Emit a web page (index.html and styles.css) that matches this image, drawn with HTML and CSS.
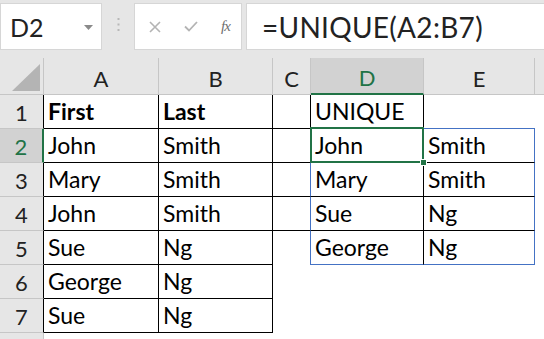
FILE: index.html
```html
<html>
<head>
<link rel="stylesheet" href="styles.css">
</head>
<body>
<div class="toolbar">
    <div class="namebox">
        <span class="ref">D2</span>
        <svg class="drop" width="9" height="5" viewBox="0 0 9 5"><path d="M0 0h9L4.5 5z" fill="#8a8a8a"/></svg>
    </div>
    <div class="grip">
        <svg width="3" height="13" viewBox="0 0 3 13"><rect x="0.5" y="0" width="2" height="2" fill="#b8b8b8"/><rect x="0.5" y="5.5" width="2" height="2" fill="#b8b8b8"/><rect x="0.5" y="11" width="2" height="2" fill="#b8b8b8"/></svg>
    </div>
    <div class="fxbox">
        <svg width="12" height="12" viewBox="0 0 12 12"><path d="M1 1L11 11M11 1L1 11" stroke="#b4b4b4" stroke-width="1.6"/></svg>
        <svg width="14" height="11" viewBox="0 0 14 11"><path d="M1 5.5L5 9.5L13 1" stroke="#b4b4b4" stroke-width="1.8" fill="none"/></svg>
        <span class="fx">fx</span>
    </div>
    <div class="formula">=UNIQUE(A2:B7)</div>
</div>
<div class="sheet">
    <div class="hd corner"><svg width="28" height="27" viewBox="0 0 28 27"><path d="M28 0V27H0z" fill="#b4b4b4"/></svg></div>
    <div class="hd col">A</div>
    <div class="hd col">B</div>
    <div class="hd col">C</div>
    <div class="hd col sel">D</div>
    <div class="hd col">E</div>
    <div class="hd col last"></div>

    <div class="hd row ruled">1</div>
    <div class="c tb bold">First</div>
    <div class="c tb bold">Last</div>
    <div class="c tb"></div>
    <div class="c tb">UNIQUE</div>
    <div class="c rng-top"></div>
    <div class="c"></div>

    <div class="hd row ruled sel">2</div>
    <div class="c tb">John</div>
    <div class="c tb">Smith</div>
    <div class="c cb rng-left"></div>
    <div class="c tb active">John</div>
    <div class="c cb rng-right">Smith</div>
    <div class="c"></div>

    <div class="hd row ruled">3</div>
    <div class="c tb">Mary</div>
    <div class="c tb">Smith</div>
    <div class="c cb rng-left"></div>
    <div class="c tb">Mary</div>
    <div class="c cb rng-right">Smith</div>
    <div class="c"></div>

    <div class="hd row ruled">4</div>
    <div class="c tb">John</div>
    <div class="c tb">Smith</div>
    <div class="c cb rng-left"></div>
    <div class="c tb">Sue</div>
    <div class="c cb rng-right">Ng</div>
    <div class="c"></div>

    <div class="hd row ruled">5</div>
    <div class="c tb">Sue</div>
    <div class="c tb">Ng</div>
    <div class="c rng-left"></div>
    <div class="c rng-bottom tb">George</div>
    <div class="c rng-bottom rng-right">Ng</div>
    <div class="c"></div>

    <div class="hd row ruled">6</div>
    <div class="c tb">George</div>
    <div class="c tb">Ng</div>
    <div class="c"></div>
    <div class="c"></div>
    <div class="c"></div>
    <div class="c"></div>

    <div class="hd row ruled">7</div>
    <div class="c tb">Sue</div>
    <div class="c tb">Ng</div>
    <div class="c"></div>
    <div class="c"></div>
    <div class="c"></div>
    <div class="c"></div>

    <div class="hd row"></div>
    <div class="c"></div>
    <div class="c"></div>
    <div class="c"></div>
    <div class="c"></div>
    <div class="c"></div>
    <div class="c"></div>
</div>
</body>
</html>
```

FILE: styles.css
```css
body {
    margin: 0;
    width: 544px;
    height: 339px;
    overflow: hidden;
    background: #e6e6e6;
    font-family: Lato, "Open Sans", sans-serif;
    color: #000;
}
.toolbar {
    display: flex;
    height: 58px;
    padding-top: 3px;
    box-sizing: border-box;
}
.namebox {
    display: flex;
    align-items: center;
    justify-content: space-between;
    width: 102px;
    height: 47px;
    box-sizing: border-box;
    background: #fff;
    border: 1px solid #d6d6d6;
    padding: 0 8px 0 9px;
}
.ref {
    font-size: 25px;
    color: #222;
}
.drop {
    margin-top: 2px;
}
.grip {
    display: flex;
    align-items: center;
    justify-content: center;
    width: 32px;
    height: 47px;
    padding-bottom: 4px;
    box-sizing: border-box;
}
.fxbox {
    display: flex;
    align-items: center;
    width: 108px;
    height: 47px;
    box-sizing: border-box;
    background: #fff;
    border: 1px solid #d6d6d6;
    padding: 0 0 0 14px;
    gap: 23px;
}
.fx {
    font-family: "Liberation Serif", serif;
    font-style: italic;
    font-size: 15px;
    color: #6f6f6f;
    letter-spacing: -1px;
}
.formula {
    flex: 1;
    margin-left: 4px;
    height: 47px;
    box-sizing: border-box;
    background: #fff;
    border: 1px solid #d6d6d6;
    border-right: none;
    padding: 6px 0 0 15px;
    font-size: 28px;
    color: #222;
    letter-spacing: 0.3px;
}
.sheet {
    display: grid;
    grid-template-columns: 44px 115px 114px 38px 113px 111px 1fr;
    grid-template-rows: 37px repeat(8, 34px);
    background: #fff;
}
.sheet > div {
    box-sizing: border-box;
}
.hd {
    background: #e6e6e6;
    border-right: 1px solid #c6c6c6;
    border-bottom: 1px solid #c6c6c6;
    display: flex;
    align-items: center;
    justify-content: center;
    font-size: 22px;
    color: #222;
}
.corner {
    align-items: flex-end;
    justify-content: flex-end;
    padding: 0 3px 3px 0;
    border-right-color: #c6c6c6;
}
.col {
    padding-top: 4px;
}
.col.last {
    border-right: none;
}
.row {
    padding-top: 2px;
    border-right: 1px solid #c6c6c6;
}
.row.ruled {
    border-right: 1px solid #000;
}
.hd.sel {
    background: #d2d2d2;
    color: #217346;
}
.col.sel {
    border-bottom: 2px solid #217346;
}
.row.sel {
    border-right: 2px solid #217346;
}
.c {
    display: flex;
    align-items: flex-end;
    padding: 0 4px 5px 4px;
    font-size: 23px;
    line-height: 1;
    white-space: nowrap;
}
.bold {
    font-weight: bold;
}
.tb {
    border-right: 1px solid #000;
    border-bottom: 1px solid #000;
}
.cb {
    border-bottom: 1px solid #000;
}
.rng-top {
    border-bottom: 1px solid #4472c4;
}
.rng-left {
    border-right: 1px solid #4472c4;
}
.rng-right {
    border-right: 1px solid #4472c4;
}
.rng-bottom {
    border-bottom: 1px solid #4472c4;
}
.active {
    position: relative;
}
.active::after {
    content: "";
    position: absolute;
    top: -2px;
    left: -1px;
    right: -1px;
    bottom: -1px;
    border: 2px solid #217346;
}
.active::before {
    content: "";
    position: absolute;
    right: -4px;
    bottom: -4px;
    width: 5px;
    height: 5px;
    background: #217346;
    border: 1px solid #fff;
    z-index: 1;
}
```
